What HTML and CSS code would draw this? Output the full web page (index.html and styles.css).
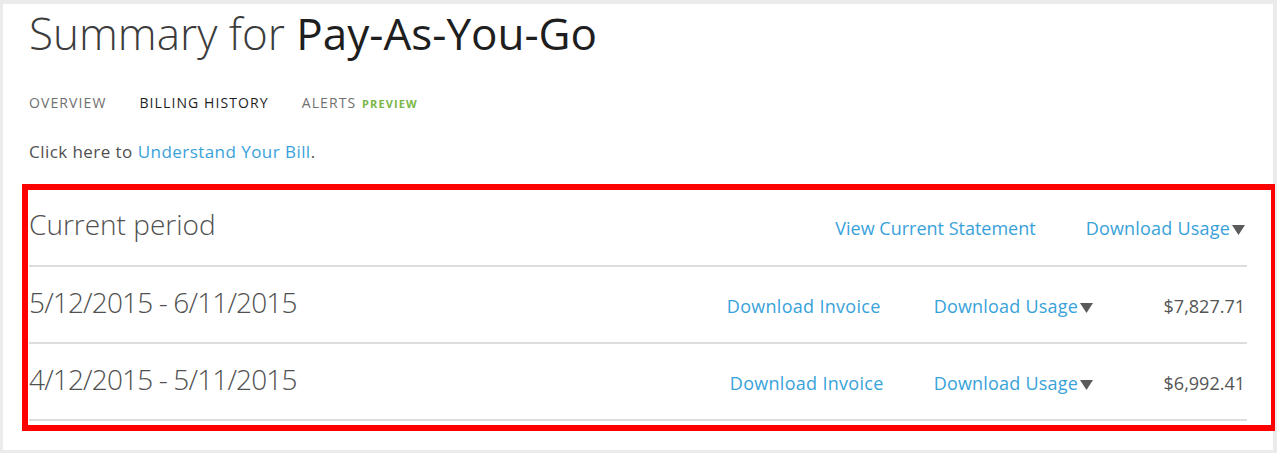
FILE: index.html
```html
<!DOCTYPE html>
<html lang="en">
<head>
<meta charset="utf-8">
<title>Summary for Pay-As-You-Go</title>
<link rel="stylesheet" href="styles.css">
</head>
<body>
<div class="panel">
  <h1 class="title"><span class="title-light">Summary for</span> <span class="title-name">Pay-As-You-Go</span></h1>
  <nav class="tabs">
    <a class="tab">OVERVIEW</a>
    <a class="tab tab-active">BILLING HISTORY</a>
    <a class="tab">ALERTS <span class="preview">PREVIEW</span></a>
  </nav>
  <p class="intro">Click here to <a class="link">Understand Your Bill</a>.</p>
  <section class="history">
    <div class="row row-head">
      <div class="period period-head">Current period</div>
      <a class="link statement">View Current Statement</a>
      <a class="link usage usage-head">Download Usage<svg class="caret" width="13" height="10" viewBox="0 0 13 10"><polygon points="0,0 13,0 6.5,10" /></svg></a>
    </div>
    <div class="row">
      <div class="period">5/12/2015 - 6/11/2015</div>
      <a class="link invoice">Download Invoice</a>
      <a class="link usage">Download Usage<svg class="caret" width="13" height="10" viewBox="0 0 13 10"><polygon points="0,0 13,0 6.5,10" /></svg></a>
      <div class="amount">$7,827.71</div>
    </div>
    <div class="row">
      <div class="period">4/12/2015 - 5/11/2015</div>
      <a class="link invoice invoice-2">Download Invoice</a>
      <a class="link usage">Download Usage<svg class="caret" width="13" height="10" viewBox="0 0 13 10"><polygon points="0,0 13,0 6.5,10" /></svg></a>
      <div class="amount">$6,992.41</div>
    </div>
  </section>
</div>
</body>
</html>
```
FILE: styles.css
```css
* { box-sizing: border-box; }
html, body { margin: 0; padding: 0; }
body {
  background: #ebebeb;
  font-family: "Open Sans", "Noto Sans", sans-serif;
  width: 1277px;
  height: 453px;
  overflow: hidden;
}
.panel {
  background: #ffffff;
  margin: 4px 0 0 3px;
  width: 1270px;
  height: 446px;
  padding: 7px 0 0 26px;
}
.title {
  margin: 0;
  font-size: 44px;
  line-height: 44px;
  font-weight: 300;
  color: #3c3c3c;
  white-space: nowrap;
}
.title-name { font-weight: 400; color: #1e1e1e; }
.tabs {
  display: flex;
  align-items: baseline;
  margin-top: 38px;
  height: 20px;
  line-height: 20px;
  font-size: 14px;
  letter-spacing: 1.1px;
}
.tab { color: #707070; margin-right: 33px; white-space: nowrap; }
.tab-active { color: #1e1e1e; }
.preview {
  color: #7ab648;
  font-size: 11px;
  font-weight: 700;
  letter-spacing: 1.1px;
  margin-left: 1px;
}
.intro {
  margin: 28px 0 0 0;
  height: 22px;
  font-size: 17px;
  line-height: 22px;
  letter-spacing: 0.45px;
  color: #505050;
}
.link { color: #38a2da; white-space: nowrap; }
.history {
  margin: 21px 0 0 -7px;
  width: 1253px;
  border: 6px solid #ff0000;
  border-right-width: 4px;
  padding: 0 24px 4px 1px;
}
.row {
  display: flex;
  align-items: baseline;
  height: 77px;
  padding-top: 20px;
  border-bottom: 2px solid #dddddd;
  line-height: 30px;
  font-size: 18px;
}
.row-head { padding-top: 19px; }
.period {
  flex: 1;
  font-size: 28px;
  font-weight: 300;
  color: #505050;
  letter-spacing: -0.85px;
  white-space: nowrap;
}
.period-head { letter-spacing: 0; }
.statement { margin-right: 50px; }
.usage { letter-spacing: 0.2px; }
.usage-head { margin-right: 2px; }
.invoice { letter-spacing: 0.3px; margin-right: 53px; }
.invoice-2 { margin-right: 50px; }
.caret { fill: #5a5a5a; margin-left: 2px; }
.amount {
  width: 154px;
  text-align: right;
  color: #555555;
  font-size: 18px;
  padding-right: 2px;
}
```
